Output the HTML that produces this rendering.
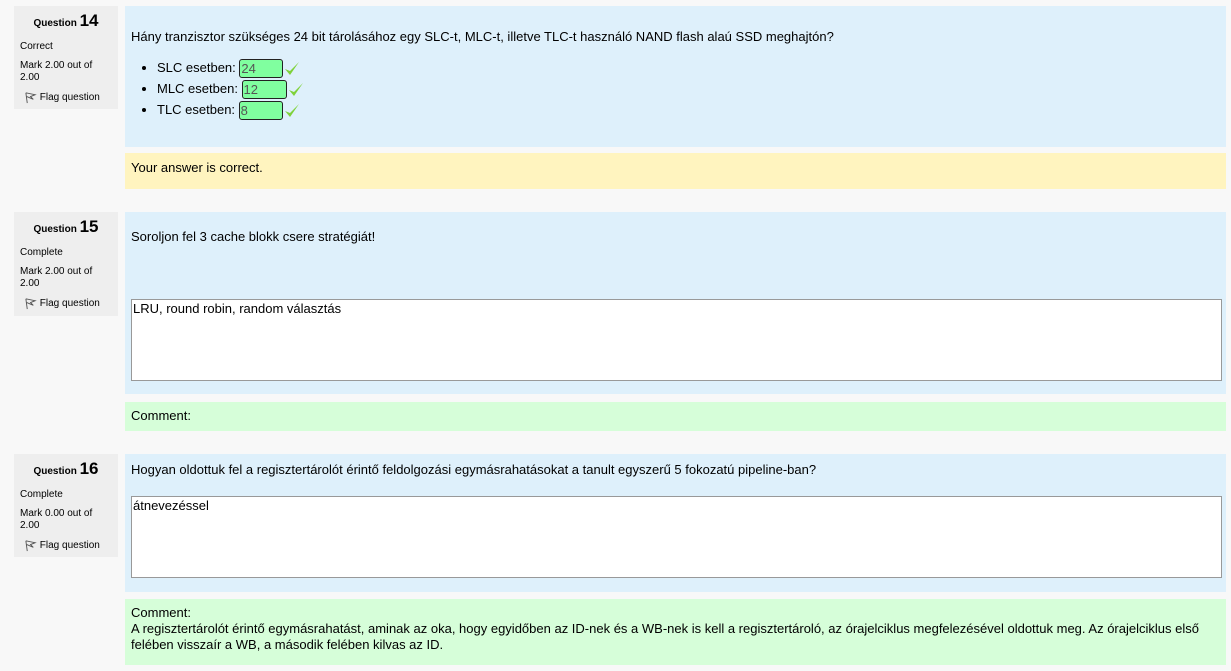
<!DOCTYPE html>
<html><head><meta charset="utf-8"><style>
body{margin:0;width:1231px;height:671px;background:#f8f8f8;font-family:"Liberation Sans",Arial,sans-serif;color:#000;position:relative;overflow:hidden}
.a{position:absolute}
.info{left:14px;width:104px;background:#eee;font-size:10px;box-sizing:border-box;padding:0 6px}
.info .q{text-align:center;font-weight:bold;font-size:10px;margin-top:9px;height:19px}
.info .q b{font-size:17px}
.info div{margin-bottom:7px;line-height:12px}
.flag{padding-left:4px;margin-top:4px}
.c{left:125px;width:1101px;background:#def0fb;font-size:13px}
.y{left:125px;width:1101px;background:#fff4bf;font-size:13px}
.g{left:125px;width:1101px;background:#d6fed9;font-size:13px}
.ta{position:absolute;left:6px;width:1091px;height:82px;background:#fff;border:1px solid #999;box-sizing:border-box;padding:1px 1px;font-size:13px}
.in{display:inline-block;background:#80ff9f;border:1px solid #222;border-radius:3px;width:44px;height:19px;line-height:17px;color:#555;font-size:13px;vertical-align:middle;padding-left:1px;box-sizing:border-box}
li{height:21px;line-height:21px}
.ck{display:inline-block;vertical-align:middle}
</style></head><body>
<svg width="0" height="0" style="position:absolute"><defs><symbol id="f" viewBox="0 0 14 14"><path d="M2 2 L3.5 13 M2 2 L12 4 L7 6 L10 9 L3 6" fill="none" stroke="#555" stroke-width="1"/></symbol><symbol id="k" viewBox="0 0 18 18"><path d="M2 9 L7 15 L16 2 L7 11 Z" fill="#7ed23a"/></symbol></defs></svg>

<div class="a info" style="top:6px;height:103px"><div class="q">Question <b>14</b></div><div>Correct</div><div>Mark 2.00 out of 2.00</div><div class="flag"><svg width="13" height="13" style="vertical-align:middle"><use href="#f"/></svg> Flag question</div></div>
<div class="a c" style="top:6px;height:141px">
<div class="a" style="left:6px;top:23px">Hány tranzisztor szükséges 24 bit tárolásához egy SLC-t, MLC-t, illetve TLC-t használó NAND flash alaú SSD meghajtón?</div>
<ul class="a" style="left:-8px;top:51px;margin:0;padding-left:40px">
<li>SLC esetben: <span class="in">24</span><svg class="ck" width="18" height="18"><use href="#k"/></svg></li>
<li>MLC esetben: <span class="in" style="width:45px">12</span><svg class="ck" width="18" height="18"><use href="#k"/></svg></li>
<li>TLC esetben: <span class="in">8</span><svg class="ck" width="18" height="18"><use href="#k"/></svg></li>
</ul></div>
<div class="a y" style="top:153px;height:36px"><div class="a" style="left:6px;top:7px">Your answer is correct.</div></div>

<div class="a info" style="top:212px;height:104px"><div class="q">Question <b>15</b></div><div>Complete</div><div>Mark 2.00 out of 2.00</div><div class="flag"><svg width="13" height="13" style="vertical-align:middle"><use href="#f"/></svg> Flag question</div></div>
<div class="a c" style="top:212px;height:182px">
<div class="a" style="left:6px;top:17px">Soroljon fel 3 cache blokk csere stratégiát!</div>
<div class="ta" style="top:87px">LRU, round robin, random választás</div></div>
<div class="a g" style="top:402px;height:29px"><div class="a" style="left:6px;top:6px">Comment:</div></div>

<div class="a info" style="top:454px;height:103px"><div class="q">Question <b>16</b></div><div>Complete</div><div>Mark 0.00 out of 2.00</div><div class="flag"><svg width="13" height="13" style="vertical-align:middle"><use href="#f"/></svg> Flag question</div></div>
<div class="a c" style="top:454px;height:138px">
<div class="a" style="left:6px;top:8px">Hogyan oldottuk fel a regisztertárolót érintő feldolgozási egymásrahatásokat a tanult egyszerű 5 fokozatú pipeline-ban?</div>
<div class="ta" style="top:42px">átnevezéssel</div></div>
<div class="a g" style="top:599px;height:66px"><div class="a" style="left:6px;top:6px;line-height:16px;width:1090px">Comment:<br>A regisztertárolót érintő egymásrahatást, aminak az oka, hogy egyidőben az ID-nek és a WB-nek is kell a regisztertároló, az órajelciklus megfelezésével oldottuk meg. Az órajelciklus első felében visszaír a WB, a második felében kilvas az ID.</div></div>
</body></html>
